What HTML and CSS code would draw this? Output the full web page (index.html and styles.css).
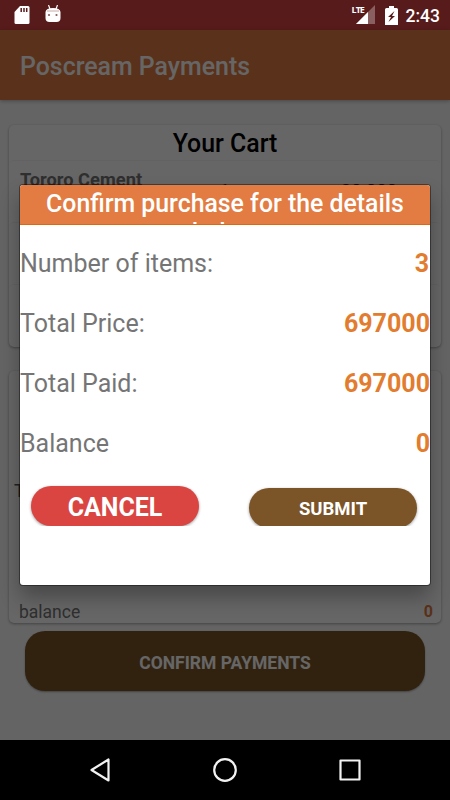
FILE: index.html
```html
<!DOCTYPE html>
<html lang="en">
<head>
    <meta charset="utf-8">
    <title>Poscream Payments</title>
    <link rel="stylesheet" href="styles.css">
</head>
<body>
    <div class="status-bar">
        <svg class="sd" width="16" height="20" viewBox="0 0 16 20"><path fill="#fff" d="M6 0h8q1.500 0 1.500 1.500v15q0 1.500-1.500 1.500H2q-1.500 0-1.500-1.500V6z"/><path stroke="#581b1b" stroke-width="1.500" d="M7.200 2v4M10 2v4M12.700 2v4"/></svg>
        <svg class="robot" width="16" height="18" viewBox="0 0 16 18"><path stroke="#fff" stroke-width="1.200" d="M3.500 0l1.500 4M12.500 0L11 4"/><path fill="#fff" d="M.500 7Q1 3 8 3t7.500 4v6q0 4-4 4h-7q-4 0-4-4z"/><path stroke="#c9abab" d="M2 6h12"/><circle cx="4" cy="10" r="1.100" fill="#8a5a5a"/><circle cx="11.500" cy="10" r="1.100" fill="#8a5a5a"/></svg>
        <span class="lte">LTE</span>
        <svg class="signal" width="19" height="19" viewBox="0 0 19 19"><path fill="#fff" fill-opacity=".3" d="M19 0v19H0z"/><path fill="#fff" d="M12 7v12H0z"/></svg>
        <svg class="battery" width="13" height="19" viewBox="0 0 13 19"><path fill="#fff" d="M4 0h5v2h2.500Q13 2 13 3.500V19H0V3.500Q0 2 1.500 2H4z"/><path fill="#581b1b" d="M9.500 5L3 11h3l-2.500 5L10 10H7z"/></svg>
        <span class="clock">2:43</span>
    </div>
    <div class="app">
        <div class="app-bar">Poscream Payments</div>
        <div class="card cart">
            <div class="cart-title">Your Cart</div>
            <div class="cart-row">
                <div class="product">Tororo Cement</div>
                <div class="amount"><span class="qty">1</span><span class="price">30,000</span></div>
            </div>
            <div class="cart-row"></div>
            <div class="cart-row"></div>
        </div>
        <div class="card pay">
            <div class="total">Total</div>
            <div class="balance"><span>balance</span><b>0</b></div>
        </div>
        <button class="confirm">CONFIRM PAYMENTS</button>
    </div>
    <div class="overlay">
        <div class="dialog">
            <div class="dialog-title">Confirm purchase for the details below</div>
            <div class="row"><span>Number of items:</span><b class="count">3</b></div>
            <div class="row"><span>Total Price:</span><b>697000</b></div>
            <div class="row"><span>Total Paid:</span><b>697000</b></div>
            <div class="row"><span>Balance</span><b>0</b></div>
            <div class="buttons">
                <button class="cancel">CANCEL</button>
                <button class="submit">SUBMIT</button>
            </div>
        </div>
    </div>
    <div class="nav-bar">
        <svg width="24" height="28" viewBox="0 0 24 28"><path d="M20.500 3.500v21L3.500 14z"/></svg>
        <svg width="26" height="28" viewBox="0 0 26 28"><circle cx="13" cy="14" r="10.800"/></svg>
        <svg width="24" height="28" viewBox="0 0 24 28"><path d="M2.500 4.500h19v19h-19z"/></svg>
    </div>
</body>
</html>
```
FILE: styles.css
```css
* {
    box-sizing: border-box;
}

body {
    position: relative;
    margin: 0;
    width: 450px;
    height: 800px;
    overflow: hidden;
    font-family: Roboto, sans-serif;
    background: #fafafa;
}

button {
    border: 0;
    padding: 0;
    color: #fff;
    font-family: Roboto, sans-serif;
    font-weight: bold;
}

.status-bar {
    display: flex;
    height: 30px;
    padding: 5px 10px 0 14px;
    background: #581b1b;
    color: #fff;
}

.sd {
    margin-top: 1px;
}

.robot {
    margin-left: 15px;
}

.lte {
    width: 14px;
    margin-left: auto;
    font-family: "Open Sans", sans-serif;
    font-size: 9px;
    font-weight: bold;
    line-height: 10px;
    letter-spacing: -1px;
}

.signal {
    margin-left: -10px;
}

.battery {
    margin: 1px 8px 0 10px;
}

.clock {
    font-size: 17.500px;
    font-weight: 500;
    line-height: 22px;
}

.app {
    height: 710px;
}

.app-bar {
    height: 70px;
    padding-left: 20px;
    background: #e27c42;
    box-shadow: 0 1px 4px rgba(0,0,0,.3);
    color: #fff;
    font-size: 24.900px;
    font-weight: 500;
    line-height: 73px;
}

.card {
    margin: 0 9px;
    border-radius: 5px;
    background: #fff;
    box-shadow: 0 1px 3px rgba(0,0,0,.35);
}

.cart {
    height: 222px;
    margin-top: 25px;
}

.cart-title {
    height: 35px;
    font-size: 24.900px;
    font-weight: 500;
    line-height: 38px;
    text-align: center;
}

.cart-row {
    height: 62px;
    border-top: 1px solid #f6f6f6;
    border-radius: 5px;
}

.product {
    height: 19px;
    padding: 7px 0 0 11px;
    color: #757575;
    font-size: 18.300px;
    font-weight: bold;
    line-height: 24px;
}

.amount {
    display: flex;
    font-size: 18px;
    font-weight: bold;
    line-height: 22px;
}

.qty {
    width: 122px;
    margin-left: 210px;
}

.pay {
    display: flex;
    flex-direction: column;
    justify-content: space-between;
    height: 252px;
    margin-top: 24px;
    padding: 109px 8px 0 5px;
}

.total {
    color: #555;
    font-size: 18px;
    line-height: 22px;
}

.balance {
    display: flex;
    justify-content: space-between;
    padding-left: 5px;
    color: #757575;
    font-size: 17.500px;
    line-height: 22px;
}

.balance b {
    color: #e27c42;
    font-size: 16px;
}

.confirm {
    display: block;
    width: 400px;
    height: 60px;
    margin: 8px auto 0;
    padding-top: 3px;
    border-radius: 20px;
    background: #7b5427;
    box-shadow: 0 1px 2px rgba(0,0,0,.35);
    font-size: 17.500px;
}

/* dims everything between the status bar and the nav bar */
.overlay {
    position: absolute;
    top: 30px;
    left: 0;
    width: 450px;
    height: 710px;
    padding: 155px 20px;
    overflow: hidden;
    background: rgba(0,0,0,.6);
}

.dialog {
    height: 400px;
    border-radius: 3px;
    overflow: hidden;
    background: #fff;
    box-shadow: 0 0 0 1px rgba(0,0,0,.4), 0 12px 20px rgba(0,0,0,.3);
}

.dialog-title {
    height: 40px;
    padding: 4px 20px 0;
    overflow: hidden;
    background: #e27c42;
    border-bottom: 1px solid #dc6715;
    color: #fff;
    font-size: 24.850px;
    font-weight: 500;
    line-height: 29px;
    text-align: center;
}

.row {
    display: flex;
    justify-content: space-between;
    height: 60px;
    color: #757575;
    font-size: 25px;
    line-height: 78px;
}

.row b {
    color: #e27c2f;
}

.row .count {
    margin-right: 1px;
}

/* the row is shorter than the submit button and clips its bottom */
.buttons {
    display: flex;
    justify-content: space-between;
    height: 61px;
    padding: 21px 13px 0 11px;
    overflow: hidden;
}

.buttons button {
    width: 168px;
    height: 40px;
    border-radius: 20px;
    box-shadow: 0 1px 3px rgba(0,0,0,.4);
}

.buttons .cancel {
    padding-top: 2px;
    background: #da4542;
    font-size: 25px;
}

.buttons .submit {
    margin-top: 2px;
    padding-top: 2px;
    background: #7b5427;
    font-size: 18.500px;
}

.nav-bar {
    display: flex;
    justify-content: space-between;
    align-items: center;
    height: 60px;
    padding: 0 88px;
    background: #000;
}

.nav-bar svg {
    fill: none;
    stroke: #f2f2f2;
    stroke-width: 2.200;
    stroke-linejoin: round;
}
```
